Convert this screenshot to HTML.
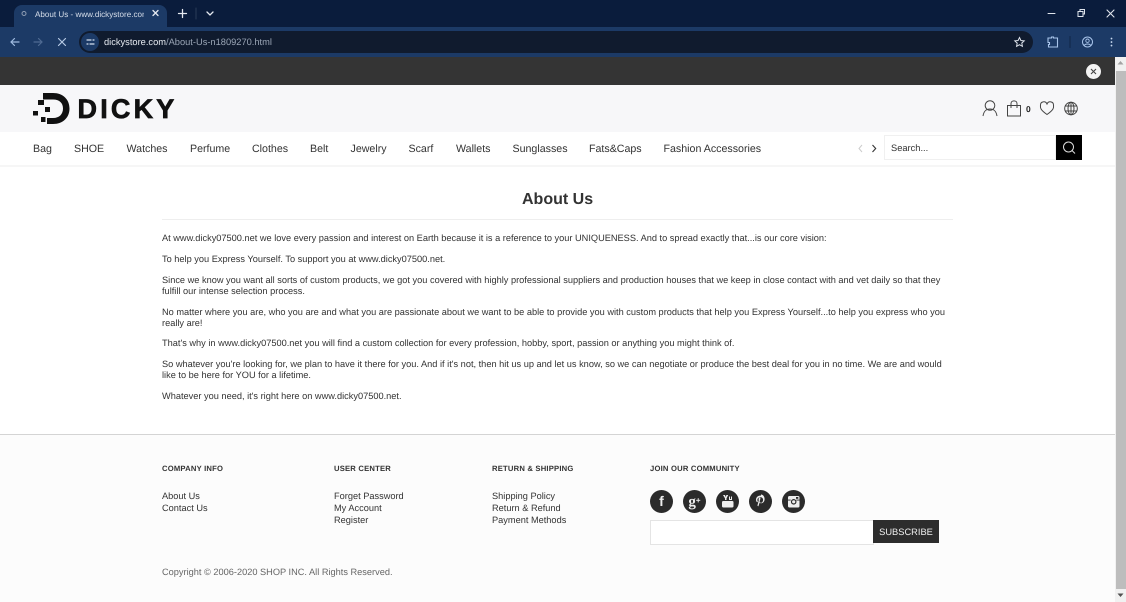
<!DOCTYPE html>
<html><head><meta charset="utf-8"><style>
*{box-sizing:border-box}
html,body{margin:0;padding:0;width:1126px;height:602px;overflow:hidden;background:#fff;font-family:"Liberation Sans",sans-serif;text-rendering:geometricPrecision}
.a{position:absolute;white-space:nowrap}
.nav{top:141px;font-size:10.65px;line-height:16px;color:#333}
.p{left:162px;font-size:9.23px;line-height:10.5px;color:#333}
.f{font-size:9.23px;line-height:12px;color:#333}
.h{top:464px;font-size:7.65px;line-height:10px;font-weight:bold;color:#333;letter-spacing:.2px}
.c{width:23px;height:23px;border-radius:50%;background:#2b2b2b;top:490px}
svg{position:absolute;overflow:visible}
</style></head><body>
<div class="a" style="left:0;top:0;width:1126px;height:27px;background:#0a1c3c"></div>
<div class="a" style="left:14px;top:5px;width:153px;height:22px;background:#1c3a66;border-radius:8px 8px 0 0"></div>
<div class="a" style="left:0;top:27px;width:1126px;height:30px;background:#1c3a66"></div>
<div class="a" style="left:79px;top:31px;width:954px;height:22px;background:#101b2e;border-radius:11px"></div>
<div class="a" style="left:81px;top:33px;width:18px;height:18px;background:#1c3a66;border-radius:50%"></div>
<div class="a" style="left:35px;top:9px;font-size:8.1px;line-height:11px;color:#d5dde9;width:109px;overflow:hidden">About Us - www.dickystore.com</div>
<div class="a" style="left:104px;top:36px;font-size:9.3px;line-height:12px;color:#9aa5b5"><span style="color:#e8ecf2">dickystore.com</span>/About-Us-n1809270.html</div>
<svg style="left:0;top:0" width="1126" height="60" fill="none" stroke-linecap="round">
<circle cx="24" cy="13.500" r="2" stroke="#8f9db3"/>
<path d="M153 10.500l5 5m0-5l-5 5" stroke="#e5e9f0" stroke-width="1.300"/>
<path d="M178.500 13.500h8m-4-4v8" stroke="#e5e9f0" stroke-width="1.300"/>
<path d="M207 12l3 3 3-3" stroke="#e5e9f0" stroke-width="1.300"/>
<path d="M196 8v11" stroke="#2a3c58"/>
<path d="M1048 13.500h7" stroke="#dfe4ec"/>
<path d="M1078 11.500h5v5h-5zM1080 11v-1.500h4.500V14H1083" stroke="#dfe4ec"/>
<path d="M1107 10l7 7m0-7l-7 7" stroke="#dfe4ec" stroke-width="1.100"/>
<path d="M19 42h-8m3.500-3.500L11 42l3.500 3.500" stroke="#9fbbe0" stroke-width="1.200"/>
<path d="M34 42h8m-3.500-3.500L42 42l-3.500 3.500" stroke="#4f6a92" stroke-width="1.200"/>
<path d="M58.500 38.500l7 7m0-7l-7 7" stroke="#b6c9e4" stroke-width="1.200"/>
<path d="M87 40h4m2 0h1M87 44h1m2 0h4" stroke="#d5e0f0" stroke-width="1.200"/>
<path d="M1019.500 37.500l1.400 3 3.300.4-2.400 2.200.6 3.200-2.900-1.600-2.900 1.600.6-3.200-2.400-2.200 3.300-.4z" stroke="#dfe4ec"/>
<path d="M1048 38h3.500v-1h2v1h4v9h-9v-2.500h1v-2h-1.500z" stroke="#a8c4ea" stroke-width="1.100"/>
<path d="M1070 36.500v11" stroke="#0f2547"/>
<circle cx="1087.500" cy="42" r="5" stroke="#a8c4ea"/><circle cx="1087.500" cy="40.700" r="1.700" stroke="#a8c4ea" stroke-width=".9"/><path d="M1084 45.500c1.500-2 5.500-2 7 0" stroke="#a8c4ea" stroke-width=".9"/>
<path d="M1111.500 38.500v.1m0 3.400v.1m0 3.400v.1" stroke="#c6d7ee" stroke-width="1.800"/>
</svg>
<div class="a" style="left:0;top:57px;width:1115px;height:28px;background:#343434"></div>
<div class="a" style="left:1086px;top:64px;width:15px;height:15px;border-radius:50%;background:#f4f4f4"></div>
<svg style="left:0;top:0" width="1126" height="90" fill="none"><path d="M1091 69l5 5m0-5l-5 5" stroke="#444" stroke-width="1.100"/></svg>
<div class="a" style="left:1115px;top:57px;width:11px;height:545px;background:#f1f1f1"></div>
<div class="a" style="left:1116px;top:71px;width:10px;height:518px;background:#bdbdbd"></div>
<svg style="left:0;top:0" width="1126" height="602"><path d="M1120.500 61l3 3.500h-6z" fill="#a3a3a3"/><path d="M1120.500 597l3-3.500h-6z" fill="#505050"/></svg>

<div class="a" style="left:0;top:85px;width:1115px;height:47px;background:#f7f7f9"></div>
<svg style="left:0;top:0" width="1126" height="140" fill="#111">
<path d="M43 93h10c10 0 16.500 6.500 16.500 15.500S63 124 53 124h-6v-6h6c6.500 0 10-4 10-9.500S59.500 99.500 53 99.500h-10z"/>
<path d="M38 100h6v5h-6zM45 107h5v5h-5zM33 111h5v4.500h-5zM41 117h4.500v5H41z"/>
</svg>
<div class="a" style="left:77.500px;top:92px;font-size:27px;line-height:34px;font-weight:bold;color:#111;letter-spacing:3.2px;-webkit-text-stroke:.7px #111">DICKY</div>
<svg style="left:0;top:0" width="1126" height="140" fill="none" stroke="#444" stroke-width="1">
<circle cx="990" cy="105.500" r="4.800"/><path d="M983 116c1-5.500 3.500-7 7-7s6 1.500 7 7"/>
<path d="M1007.500 105.500h13v10.500h-13zM1011 108v-4.500c0-3.500 6-3.500 6 0v4.500"/>
<path d="M1047 114.500c-8-5.500-6.500-7.500-6.500-9.500 0-3.500 5-4.500 6.500-1 1.500-3.500 6.500-2.500 6.500 1 0 2 1.500 4-6.500 9.500z"/>
<circle cx="1071" cy="108.500" r="6.300"/><ellipse cx="1071" cy="108.500" rx="3" ry="6.300"/><path d="M1071 102v13M1065 106h12M1065 111h12"/>
</svg>
<div class="a" style="left:1026px;top:104px;font-size:8.500px;line-height:10px;font-weight:bold;color:#222">0</div>

<div class="a nav" style="left:33px">Bag</div><div class="a nav" style="left:74px">SHOE</div><div class="a nav" style="left:126.500px">Watches</div><div class="a nav" style="left:190px">Perfume</div><div class="a nav" style="left:252px">Clothes</div><div class="a nav" style="left:310px">Belt</div><div class="a nav" style="left:350.500px">Jewelry</div><div class="a nav" style="left:408.500px">Scarf</div><div class="a nav" style="left:456px">Wallets</div><div class="a nav" style="left:512.500px">Sunglasses</div><div class="a nav" style="left:589px">Fats&amp;Caps</div><div class="a nav" style="left:663.500px">Fashion Accessories</div>
<div class="a" style="left:884px;top:135px;width:172px;height:25px;border:1px solid #f0f0f0;background:#fff"></div>
<div class="a" style="left:891px;top:142.500px;font-size:9.300px;line-height:11px;color:#333">Search...</div>
<div class="a" style="left:1056px;top:135px;width:26px;height:25px;background:#000"></div>
<svg style="left:0;top:0" width="1126" height="170" fill="none">
<path d="M862 145l-3 3.500 3 3.500" stroke="#ccc"/><path d="M872.500 145l3.200 3.500-3.200 3.500" stroke="#333" stroke-width="1.100"/>
<circle cx="1068.500" cy="147" r="5" stroke="#ddd"/><path d="M1072 150.500l3 3" stroke="#ddd"/>
</svg>
<div class="a" style="left:0;top:165px;width:1115px;height:2px;background:#f6f6f6"></div>

<div class="a" style="left:522px;top:188.500px;font-size:16px;line-height:21px;font-weight:bold;color:#333">About Us</div>
<div class="a" style="left:162px;top:219px;width:791px;height:1px;background:#eee"></div>
<div class="a p" style="top:233px">At www.dicky07500.net we love every passion and interest on Earth because it is a reference to your UNIQUENESS. And to spread exactly that...is our core vision:</div>
<div class="a p" style="top:254px">To help you Express Yourself. To support you at www.dicky07500.net.</div>
<div class="a p" style="top:275px">Since we know you want all sorts of custom products, we got you covered with highly professional suppliers and production houses that we keep in close contact with and vet daily so that they<br>fulfill our intense selection process.</div>
<div class="a p" style="top:307px">No matter where you are, who you are and what you are passionate about we want to be able to provide you with custom products that help you Express Yourself...to help you express who you<br>really are!</div>
<div class="a p" style="top:338px">That's why in www.dicky07500.net you will find a custom collection for every profession, hobby, sport, passion or anything you might think of.</div>
<div class="a p" style="top:359px">So whatever you're looking for, we plan to have it there for you. And if it's not, then hit us up and let us know, so we can negotiate or produce the best deal for you in no time. We are and would<br>like to be here for YOU for a lifetime.</div>
<div class="a p" style="top:391px">Whatever you need, it's right here on www.dicky07500.net.</div>

<div class="a" style="left:0;top:434px;width:1115px;height:168px;background:#fcfcfc;border-top:1px solid #d4d4d4"></div>
<div class="a h" style="left:162px">COMPANY INFO</div><div class="a h" style="left:334px">USER CENTER</div><div class="a h" style="left:492px">RETURN &amp; SHIPPING</div><div class="a h" style="left:650px">JOIN OUR COMMUNITY</div>
<div class="a f" style="left:162px;top:490px">About Us<br>Contact Us</div>
<div class="a f" style="left:334px;top:490px">Forget Password<br>My Account<br>Register</div>
<div class="a f" style="left:492px;top:490px">Shipping Policy<br>Return &amp; Refund<br>Payment Methods</div>
<div class="a" style="left:162px;top:566px;font-size:9.23px;line-height:12px;color:#666">Copyright © 2006-2020 SHOP INC. All Rights Reserved.</div>

<div class="a c" style="left:650px"></div><div class="a c" style="left:683px"></div><div class="a c" style="left:716px"></div><div class="a c" style="left:749px"></div><div class="a c" style="left:782px"></div>
<div class="a" style="left:650px;top:490px;width:23px;text-align:center;font-size:14px;line-height:23px;font-weight:bold;color:#eee">f</div>
<div class="a" style="left:683px;top:490px;width:23px;text-align:center;font-family:'Liberation Serif',serif;font-size:15px;line-height:21px;font-weight:bold;color:#eee">g<span style="font-size:8px;vertical-align:3px;font-family:'Liberation Sans',sans-serif">+</span></div>
<svg style="left:0;top:0" width="1126" height="602" fill="#eee">
<path d="M723 495h2l.7 2 .7-2h1.800l-1.700 3.400V500h-1.500v-1.600zM729 496.500h1v2.500h1v-2.500h1V500h-3z"/>
<rect x="722" y="501" width="11.500" height="6.500" rx="1.200"/>
<path d="M761 495.500c-3.500 0-5 2.200-5 4.200 0 1.200.5 2.200 1.400 2.600.3-.3.4-.8.3-1.100-.8-1.300-.3-4 2.900-4 3.500 0 3 5.500.4 5.500-1 0-1.500-.8-1.300-1.500l.7-2.600c.2-1.200-1.700-1.400-1.800.5 0 .6.200 1 .2 1l-1.400 5.500 1 .8 1.200-3.800c1.800 1.700 5-.1 5-3.500 0-2.600-1.700-4.600-3.600-4.600z"/>
<rect x="788" y="496" width="11.500" height="11.500" rx="1.500"/>
<path d="M788 499.600h2.700v.9H788zM796.300 499.600h3.200v.9h-3.200z" fill="#2b2b2b"/>
<circle cx="793.700" cy="501.800" r="2.800" fill="#2b2b2b"/><circle cx="793.700" cy="501.800" r="1.600"/>
<rect x="796" y="497" width="2.300" height="1.800" fill="#2b2b2b"/>
</svg>
<div class="a" style="left:650px;top:520px;width:224px;height:25px;border:1px solid #e4e4e4;background:#fff"></div>
<div class="a" style="left:873px;top:520px;width:66px;height:23px;background:#2d2d2d;color:#eee;font-size:9.3px;line-height:24px;text-align:center">SUBSCRIBE</div>
</body></html>
